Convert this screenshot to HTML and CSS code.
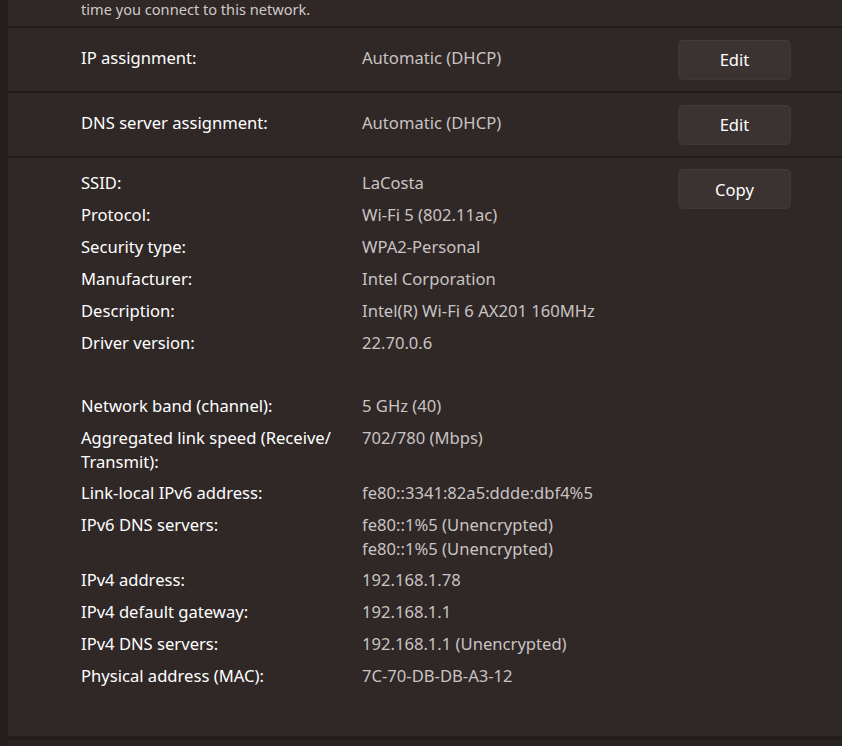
FILE: index.html
```html
<!DOCTYPE html>
<html lang="en">
<head>
<meta charset="utf-8">
<title>Wi-Fi properties</title>
<link rel="stylesheet" href="styles.css">
</head>
<body>
<div class="page">
  <div class="panel">
    <div class="intro">time you connect to this network.</div>
    <div class="setting">
      <div class="label">IP assignment:</div>
      <div class="value">Automatic (DHCP)</div>
      <button class="btn">Edit</button>
    </div>
    <div class="setting">
      <div class="label">DNS server assignment:</div>
      <div class="value">Automatic (DHCP)</div>
      <button class="btn">Edit</button>
    </div>
    <div class="details">
      <div class="kv">
        <div class="label">SSID:</div><div class="value">LaCosta</div>
        <div class="label">Protocol:</div><div class="value">Wi-Fi 5 (802.11ac)</div>
        <div class="label">Security type:</div><div class="value">WPA2-Personal</div>
        <div class="label">Manufacturer:</div><div class="value">Intel Corporation</div>
        <div class="label">Description:</div><div class="value">Intel(R) Wi-Fi 6 AX201 160MHz</div>
        <div class="label">Driver version:</div><div class="value">22.70.0.6</div>
        <div class="spacer"></div>
        <div class="label">Network band (channel):</div><div class="value">5 GHz (40)</div>
        <div class="label multi">Aggregated link speed (Receive/ Transmit):</div><div class="value">702/780 (Mbps)</div>
        <div class="label">Link-local IPv6 address:</div><div class="value">fe80::3341:82a5:ddde:dbf4%5</div>
        <div class="label">IPv6 DNS servers:</div><div class="value multi">fe80::1%5 (Unencrypted)<br>fe80::1%5 (Unencrypted)</div>
        <div class="label">IPv4 address:</div><div class="value">192.168.1.78</div>
        <div class="label">IPv4 default gateway:</div><div class="value">192.168.1.1</div>
        <div class="label">IPv4 DNS servers:</div><div class="value">192.168.1.1 (Unencrypted)</div>
        <div class="label">Physical address (MAC):</div><div class="value">7C-70-DB-DB-A3-12</div>
      </div>
      <button class="btn">Copy</button>
    </div>
  </div>
  <div class="next"></div>
</div>
</body>
</html>
```
FILE: styles.css
```css
html, body {
  margin: 0;
  padding: 0;
  height: 100%;
  overflow: hidden;
}
body {
  background: #261e1d;
  font-family: "Noto Sans", "Open Sans", sans-serif;
  font-size: 16.6px;
  color: #ffffff;
}
.page {
  padding-left: 8px;
}
.panel {
  background: #2f2827;
  height: 736px;
  box-sizing: border-box;
}
.intro {
  height: 28px;
  box-sizing: border-box;
  padding: 1px 0 0 73px;
  font-size: 14.6px;
  line-height: 16px;
  color: #cfc9c8;
  border-bottom: 2px solid #221b1a;
}
.setting {
  height: 65px;
  box-sizing: border-box;
  display: grid;
  grid-template-columns: 281px 1fr 113px;
  align-items: center;
  padding: 0 51px 3px 73px;
  border-bottom: 2px solid #221b1a;
}
.label {
  color: #ffffff;
  line-height: 24px;
}
.value {
  color: #c9c3c2;
  line-height: 24px;
}
.btn {
  height: 40px;
  width: 113px;
  border: 1px solid #3f3837;
  border-top-color: #443d3c;
  border-radius: 5px;
  background: #3a3332;
  color: #ffffff;
  font-family: inherit;
  font-size: 16.6px;
  padding: 0;
  margin-top: 3px;
}
.details {
  display: flex;
  align-items: flex-start;
  padding: 10px 51px 0 73px;
}
.details .btn {
  margin-top: 1px;
}
.kv {
  flex: 1;
  display: grid;
  grid-template-columns: 281px 1fr;
  row-gap: 8px;
  padding-top: 3px;
}
.spacer {
  grid-column: 1 / span 2;
  height: 23px;
}
.multi {
  line-height: 23.5px;
}
.label.multi {
  padding-right: 20px;
}
.next {
  margin-top: 4px;
  height: 10px;
  background: #2a2322;
}
```
